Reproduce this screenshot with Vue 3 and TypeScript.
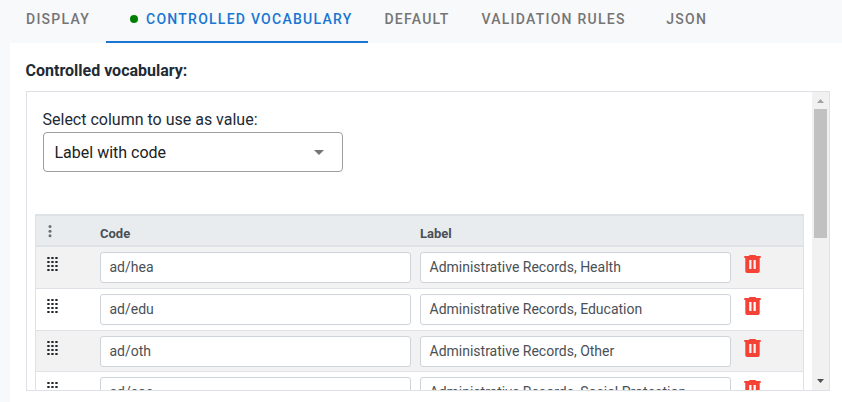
<script setup lang="ts">
import { ref } from 'vue'

interface Tab {
  label: string
  marked?: boolean
}
interface Term {
  code: string
  label: string
}

const tabs: Tab[] = [
  { label: 'Display' },
  { label: 'Controlled vocabulary', marked: true },
  { label: 'Default' },
  { label: 'Validation rules' },
  { label: 'JSON' },
]
const active = ref(1)

const terms = ref<Term[]>([
  { code: 'ad/hea', label: 'Administrative Records, Health' },
  { code: 'ad/edu', label: 'Administrative Records, Education' },
  { code: 'ad/oth', label: 'Administrative Records, Other' },
  { code: 'ad/soc', label: 'Administrative Records, Social Protection' },
])

function removeTerm(index: number) {
  terms.value.splice(index, 1)
}
</script>

<template>
  <div class="page">
    <nav class="tabs">
      <div
        v-for="(tab, i) in tabs"
        :key="tab.label"
        class="tab"
        :class="{ active: i === active }"
        @click="active = i"
      >
        <span v-if="tab.marked" class="mark"></span>{{ tab.label }}
      </div>
    </nav>
    <main class="content">
      <div class="title">Controlled vocabulary:</div>
      <div class="panel">
        <div class="body">
          <div class="field-label">Select column to use as value:</div>
          <div class="select">
            <span>Label with code</span>
            <svg width="10" height="5" viewBox="0 0 10 5"><path d="M0 0h10L5 5z" fill="#757575" /></svg>
          </div>
          <div class="table">
            <div class="row head">
              <div class="handle">
                <svg width="4" height="14" viewBox="0 0 4 14" fill="#6b6e72">
                  <circle cx="2" cy="1.6" r="1.5" /><circle cx="2" cy="6.2" r="1.5" /><circle cx="2" cy="10.8" r="1.5" />
                </svg>
              </div>
              <div class="cell">Code</div>
              <div class="cell">Label</div>
            </div>
            <div v-for="(term, i) in terms" :key="term.code" class="row item">
              <div class="handle">
                <svg width="11" height="14" viewBox="0 0 11 14" fill="#212529">
                  <template v-for="r in 4" :key="r">
                    <rect v-for="c in 3" :key="c" :x="(c - 1) * 4 + 0.3" :y="(r - 1) * 4" width="2.3" height="2" />
                  </template>
                </svg>
              </div>
              <div class="input">{{ term.code }}</div>
              <div class="input">{{ term.label }}</div>
              <svg class="trash" width="17" height="18" viewBox="0 0 17 18" @click="removeTerm(i)">
                <path
                  fill="#f44336"
                  fill-rule="evenodd"
                  d="M.3 1h4.4l1-1h5.6l1 1h4.4v2H.3zM1.3 3h14.4v13.2q0 1.8-1.8 1.8H3.1q-1.8 0-1.8-1.8zM5.2 5v9h2.3V5zM9.5 5v9h2.3V5z"
                />
              </svg>
            </div>
          </div>
        </div>
        <div class="scrollbar">
          <svg width="7" height="4" viewBox="0 0 7 4"><path d="M0 4L3.5 0L7 4z" fill="#a3a3a3" /></svg>
          <div class="thumb"></div>
          <svg class="down" width="7" height="4" viewBox="0 0 7 4"><path d="M0 0h7L3.5 4z" fill="#505050" /></svg>
        </div>
      </div>
    </main>
  </div>
</template>

<style>
body {
  overflow: hidden;
}
</style>

<style scoped>
.page {
  box-sizing: border-box;
  height: 402px;
  padding-left: 10px;
  background: #f8f9fb;
  font-family: Roboto, sans-serif;
  overflow: hidden;
}
.page * {
  box-sizing: border-box;
}
.page svg {
  display: block;
  flex: none;
}
.tabs {
  display: flex;
  height: 43px;
}
.tab {
  display: flex;
  align-items: center;
  justify-content: center;
  min-width: 90px;
  padding: 0 16px 3px;
  border-bottom: 2px solid transparent;
  color: #757575;
  font-size: 14px;
  font-weight: 500;
  line-height: 20px;
  letter-spacing: 1.25px;
  text-transform: uppercase;
  white-space: nowrap;
}
.tab.active {
  color: #1976d2;
  border-color: #1976d2;
}
.mark {
  width: 8px;
  height: 8px;
  margin: 0 8px;
  border-radius: 50%;
  background: #008000;
}
.content {
  height: 359px;
  padding: 16px 12px 11px 16px;
  background: #fff;
}
.title {
  height: 32px;
  margin-left: -0.5px;
  color: #212b36;
  font-size: 16px;
  font-weight: 700;
  line-height: 24px;
}
.panel {
  display: flex;
  height: 300px;
  border: 1px solid #dee2e6;
  overflow: hidden;
}
.body {
  flex: 1;
  padding: 16px 8px 0;
}
.field-label {
  margin-left: 7.5px;
  height: 24px;
  color: #212b36;
  font-size: 16px;
  line-height: 24px;
}
.select {
  display: flex;
  align-items: center;
  justify-content: space-between;
  width: 300px;
  height: 40px;
  margin-left: 8px;
  padding: 0 18.5px 0 10.5px;
  border: 1px solid #9e9e9e;
  border-radius: 4px;
  color: #212121;
  font-size: 16px;
}
.table {
  width: 769px;
  margin-top: 42px;
  border: 1px solid #dee2e6;
  border-top-width: 2px;
}
.row {
  display: flex;
  padding-left: 10px;
  font-size: 14px;
  color: #495057;
}
.head {
  height: 31.43px;
  border-bottom: 2px solid #dee2e6;
  background: #e9ecef;
  font-size: 13px;
  font-weight: 700;
}
.head .handle {
  padding: 9px 0 0 2.3px;
}
.head .cell {
  width: 320px;
  padding-top: 8px;
  line-height: 20px;
}
.item {
  height: 41.67px;
  padding-top: 4.87px;
  border-bottom: 1px solid #dee2e6;
}
.item:nth-child(even) {
  background: #f2f2f2;
}
.handle {
  width: 54px;
  padding: 5px 0 0 1px;
}
.input {
  width: 311px;
  height: 31px;
  margin-right: 9px;
  padding-left: 8.5px;
  border: 1px solid #ced4da;
  border-radius: 3px;
  background: #fff;
  line-height: 29px;
}
.trash {
  margin: 3px 0 0 4px;
}
.scrollbar {
  display: flex;
  flex-direction: column;
  align-items: center;
  width: 17px;
  padding: 7px 0;
  background: #f1f1f1;
}
.thumb {
  width: 13px;
  height: 129px;
  margin-top: 6px;
  background: #c1c1c1;
}
.down {
  margin-top: auto;
}
</style>
